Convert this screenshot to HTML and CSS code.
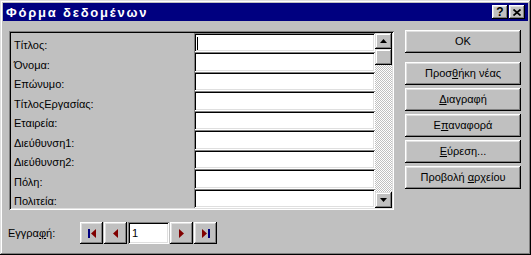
FILE: index.html
```html
<!DOCTYPE html>
<html lang="el">

<head>
    <meta charset="UTF-8">
    <title>Φόρμα δεδομένων</title>
    <link rel="stylesheet" href="styles.css">
</head>

<body>

    <div class="window">
        <div class="titlebar">
            <span class="title">Φόρμα δεδομένων</span>
            <div class="title-buttons">
                <button class="title-btn help">?</button>
                <button class="title-btn">
                    <svg width="8" height="7" viewBox="0 0 8 7">
                        <path d="M0.5 0.5 L7.5 6.5 M7.5 0.5 L0.5 6.5" stroke="#000" stroke-width="1.7" fill="none" />
                    </svg>
                </button>
            </div>
        </div>

        <div class="content">
            <div class="main-row">
                <!-- Record fields -->
                <div class="fields-frame">
                    <div class="fields">
                        <label>Τίτλος:</label>
                        <div class="field"><span class="caret"></span></div>
                        <label>Όνομα:</label>
                        <div class="field"></div>
                        <label>Επώνυμο:</label>
                        <div class="field"></div>
                        <label>ΤίτλοςΕργασίας:</label>
                        <div class="field"></div>
                        <label>Εταιρεία:</label>
                        <div class="field"></div>
                        <label>Διεύθυνση1:</label>
                        <div class="field"></div>
                        <label>Διεύθυνση2:</label>
                        <div class="field"></div>
                        <label>Πόλη:</label>
                        <div class="field"></div>
                        <label>Πολιτεία:</label>
                        <div class="field"></div>
                    </div>

                    <div class="scrollbar">
                        <button class="scroll-btn">
                            <svg width="7" height="4" viewBox="0 0 7 4">
                                <polygon points="3.5,0 7,4 0,4" fill="#000" />
                            </svg>
                        </button>
                        <div class="scroll-track">
                            <div class="scroll-thumb"></div>
                        </div>
                        <button class="scroll-btn">
                            <svg width="7" height="4" viewBox="0 0 7 4">
                                <polygon points="0,0 7,0 3.5,4" fill="#000" />
                            </svg>
                        </button>
                    </div>
                </div>

                <!-- Command buttons -->
                <div class="actions">
                    <button class="btn ok"><span>OK</span></button>
                    <button class="btn"><span>Προσ<u>θ</u>ήκη νέας</span></button>
                    <button class="btn"><span><u>Δ</u>ιαγραφή</span></button>
                    <button class="btn"><span>Ε<u>π</u>αναφορά</span></button>
                    <button class="btn"><span><u>Ε</u>ύρεση...</span></button>
                    <button class="btn"><span>Προβολή <u>α</u>ρχείου</span></button>
                </div>
            </div>

            <!-- Record navigation -->
            <div class="record-row">
                <span class="record-label">Εγγρα<u>φ</u>ή:</span>
                <button class="nav-btn">
                    <svg width="8" height="9" viewBox="0 0 8 9">
                        <rect x="0" y="0" width="2" height="9" fill="#000080" />
                        <polygon points="8,0 8,9 3,4.5" fill="#800000" />
                    </svg>
                </button>
                <button class="nav-btn">
                    <svg width="5" height="9" viewBox="0 0 5 9">
                        <polygon points="5,0 5,9 0,4.5" fill="#800000" />
                    </svg>
                </button>
                <div class="record-field">1</div>
                <button class="nav-btn">
                    <svg width="5" height="9" viewBox="0 0 5 9">
                        <polygon points="0,0 0,9 5,4.5" fill="#800000" />
                    </svg>
                </button>
                <button class="nav-btn">
                    <svg width="8" height="9" viewBox="0 0 8 9">
                        <polygon points="0,0 0,9 5,4.5" fill="#800000" />
                        <rect x="6" y="0" width="2" height="9" fill="#000080" />
                    </svg>
                </button>
            </div>
        </div>
    </div>

</body>

</html>
```

FILE: styles.css
```css
* {
    box-sizing: border-box;
    margin: 0;
    padding: 0;
}

body {
    background-color: #c0c0c0;
    font-family: "Liberation Sans", Arial, sans-serif;
    font-size: 11px;
    line-height: 13px;
    color: #000;
}

button {
    font-family: inherit;
    font-size: inherit;
    line-height: inherit;
    color: #000;
    border: none;
    background-color: #c0c0c0;
    display: flex;
    align-items: center;
    justify-content: center;
}

u {
    text-decoration: underline;
    text-underline-offset: 1px;
}

.window {
    width: 531px;
    height: 255px;
    padding: 3px;
    background-color: #c0c0c0;
    box-shadow: inset -1px -1px #000, inset 1px 1px #dfdfdf, inset -2px -2px #808080, inset 2px 2px #fff;
}

/* Title bar */
.titlebar {
    height: 18px;
    background-color: #000080;
    display: flex;
    align-items: center;
    justify-content: space-between;
    padding: 0 3px 0 3px;
}

.title {
    color: #fff;
    font-weight: bold;
    font-size: 13px;
    letter-spacing: 1.8px;
    padding-top: 1px;
}

.title-buttons {
    display: flex;
    gap: 1px;
}

.title-btn {
    width: 16px;
    height: 14px;
    font-weight: bold;
    font-size: 12px;
    box-shadow: inset -1px -1px #000, inset 1px 1px #fff, inset -2px -2px #808080, inset 2px 2px #dfdfdf;
}

.title-btn.help {
    padding-top: 1px;
}

/* Body */
.content {
    padding: 9px 0 0 5px;
}

.main-row {
    display: flex;
}

.fields-frame {
    margin: 1px 0 0 1px;
    width: 385px;
    height: 179px;
    padding: 2px;
    display: flex;
    box-shadow: inset 1px 1px #808080, inset -1px -1px #fff, inset 2px 2px #000, inset -2px -2px #dfdfdf;
}

.fields {
    width: 364px;
    display: grid;
    grid-template-columns: 183px 181px;
    grid-template-rows: repeat(9, 1fr);
}

.fields label {
    align-self: end;
    padding-left: 3px;
}

.field {
    background-color: #fff;
    position: relative;
    box-shadow: inset 1px 1px #808080, inset -1px -1px #fff, inset 2px 2px #000, inset -2px -2px #dfdfdf;
}

.caret {
    position: absolute;
    left: 3px;
    top: 4px;
    width: 1px;
    height: 13px;
    background-color: #000;
}

/* Scrollbar */
.scrollbar {
    width: 17px;
    display: flex;
    flex-direction: column;
}

.scroll-btn,
.scroll-thumb {
    width: 17px;
    height: 16px;
    box-shadow: inset -1px -1px #000, inset 1px 1px #dfdfdf, inset -2px -2px #808080, inset 2px 2px #fff;
}

.scroll-btn svg {
    display: block;
}

.scroll-track {
    flex: 1;
    background-image: conic-gradient(#fff 25%, #c0c0c0 0 50%, #fff 0 75%, #c0c0c0 0);
    background-size: 2px 2px;
}

.scroll-thumb {
    background-color: #c0c0c0;
}

/* Buttons on the right */
.actions {
    margin-left: 11px;
    width: 116px;
    display: flex;
    flex-direction: column;
    gap: 3px;
}

.btn {
    height: 23px;
    box-shadow: inset -1px -1px #000, inset 1px 1px #fff, inset -2px -2px #808080, inset 2px 2px #dfdfdf;
}

.btn.ok {
    margin-bottom: 6px;
}

/* Record navigation */
.record-row {
    margin-top: 12px;
    display: flex;
    align-items: center;
    gap: 1px;
}

.record-label {
    width: 71px;
}

.nav-btn {
    width: 23px;
    height: 22px;
    box-shadow: inset -1px -1px #000, inset 1px 1px #fff, inset -2px -2px #808080, inset 2px 2px #dfdfdf;
}

.nav-btn svg {
    display: block;
}

.record-field {
    width: 41px;
    height: 22px;
    padding: 5px 0 0 4px;
    background-color: #fff;
    box-shadow: inset 1px 1px #808080, inset -1px -1px #fff, inset 2px 2px #000, inset -2px -2px #dfdfdf;
}
```
